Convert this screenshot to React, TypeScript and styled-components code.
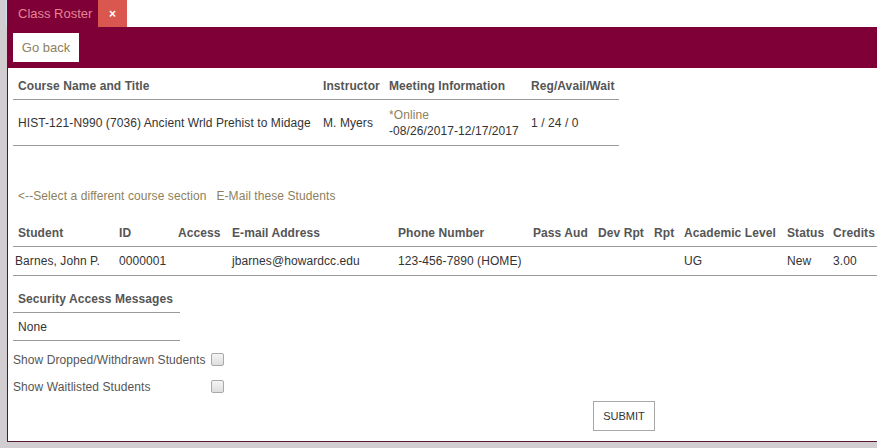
import styled, { createGlobalStyle } from 'styled-components';

const Maroon = '#7f0036';
const Tan = '#8e7f5c';

const GlobalStyle = createGlobalStyle`
    html, body {
        margin: 0;
        padding: 0;
        background: #ffffff;
        font-family: "Liberation Sans", Arial, sans-serif;
        font-size: 12px;
        letter-spacing: 0.08px;
        color: #333;
    }
    body {
        height: 448px;
        overflow: hidden;
    }
`;

const Page = styled.div`
    width: 877px;
    height: 448px;
    overflow: hidden;
    background: #d2cdd0;
`;

const TabStrip = styled.div`
    display: flex;
    height: 27px;
    margin-left: 6px;
    background: #ffffff;
    border-left: 1px solid #cfe3ee;
`;

const Tab = styled.div`
    display: flex;
    align-items: center;
    padding: 0 0 0 11px;
    width: 91px;
    box-sizing: border-box;
    background: ${Maroon};
    color: #e58592;
    font-size: 13px;
    letter-spacing: 0;
    white-space: nowrap;
`;

const CloseTab = styled.div`
    display: flex;
    align-items: center;
    justify-content: center;
    width: 29px;
    background: #d9574f;
    color: #ffffff;
    font-size: 12px;
    font-weight: bold;
`;

const Panel = styled.div`
    margin-left: 7px;
    height: 414px;
    background: #ffffff;
    border-left: 1px solid ${Maroon};
    border-bottom: 1px solid #5a1a35;
    overflow: hidden;
`;

const HeaderBar = styled.div`
    display: flex;
    align-items: center;
    height: 41px;
    padding: 0 5px;
    background: ${Maroon};
`;

const BackButton = styled.button`
    height: 29px;
    width: 66px;
    border: none;
    background: #ffffff;
    color: ${Tan};
    font-family: "Liberation Sans", Arial, sans-serif;
    font-size: 13px;
    padding: 0;
`;

const Content = styled.div`
    padding: 4px 0 0 5px;
`;

const Table = styled.table<{ $width?: number }>`
    border-collapse: collapse;
    table-layout: ${p => (p.$width ? 'fixed' : 'auto')};
    width: ${p => (p.$width ? `${p.$width}px` : 'auto')};
`;

const Th = styled.th`
    height: 27px;
    padding: 0 5px;
    text-align: left;
    font-weight: bold;
    color: #555;
    white-space: nowrap;
    overflow: hidden;
    border-bottom: 1px solid #9a9a9a;
`;

const Td = styled.td<{ $tight?: boolean; $height?: number }>`
    height: ${p => p.$height ?? 27}px;
    padding: 0 5px 0 ${p => (p.$tight ? 2 : 5)}px;
    text-align: left;
    vertical-align: middle;
    line-height: 16px;
    color: #333;
    white-space: nowrap;
    border-bottom: 1px solid #9a9a9a;
`;

const Online = styled.div`
    color: ${Tan};
`;

const LinkRow = styled.div`
    display: flex;
    gap: 10px;
    margin: 43px 0 16px 5px;
    line-height: 14px;
`;

const Link = styled.a`
    color: ${Tan};
    text-decoration: none;
`;

const SecurityTable = styled(Table)`
    margin-top: 9px;
`;

const CheckList = styled.div`
    margin-top: 5px;
`;

const CheckRow = styled.label`
    display: flex;
    align-items: center;
    height: 27px;
    color: #555;
`;

const CheckLabel = styled.span`
    width: 198px;
`;

const Box = styled.span`
    width: 11px;
    height: 11px;
    border: 1px solid #a9a9a9;
    border-radius: 2px;
    background: linear-gradient(#f4f4f4, #dedede);
`;

const SubmitRow = styled.div`
    display: flex;
    padding: 1px 0 0 580px;
`;

const SubmitButton = styled.button`
    width: 62px;
    height: 30px;
    border: 1px solid #a8a8a8;
    background: #ffffff;
    color: #333;
    font-family: "Liberation Sans", Arial, sans-serif;
    font-size: 11px;
    padding: 0;
`;

const courseCols = [305, 66, 142, 93];
const studentCols = [101, 59, 54, 166, 135, 65, 56, 30, 103, 46, 52];
const studentHeads = ['Student', 'ID', 'Access', 'E-mail Address', 'Phone Number', 'Pass Aud', 'Dev Rpt', 'Rpt', 'Academic Level', 'Status', 'Credits'];
const studentRow = ['Barnes, John P.', '0000001', '', 'jbarnes@howardcc.edu', '123-456-7890 (HOME)', '', '', '', 'UG', 'New', '3.00'];

const sum = (a: number[]) => a.reduce((x, y) => x + y, 0);

export default function App() {
    return (
        <Page>
            <GlobalStyle />
            <TabStrip>
                <Tab>Class Roster</Tab>
                <CloseTab>×</CloseTab>
            </TabStrip>
            <Panel>
                <HeaderBar>
                    <BackButton>Go back</BackButton>
                </HeaderBar>
                <Content>
                    <Table $width={sum(courseCols)}>
                        <colgroup>
                            {courseCols.map((w, i) => (
                                <col key={i} style={{ width: w }} />
                            ))}
                        </colgroup>
                        <thead>
                            <tr>
                                <Th>Course Name and Title</Th>
                                <Th>Instructor</Th>
                                <Th>Meeting Information</Th>
                                <Th>Reg/Avail/Wait</Th>
                            </tr>
                        </thead>
                        <tbody>
                            <tr>
                                <Td $height={45}>HIST-121-N990 (7036) Ancient Wrld Prehist to Midage</Td>
                                <Td $height={45}>M. Myers</Td>
                                <Td $height={45}>
                                    <Online>*Online</Online>
                                    <div>-08/26/2017-12/17/2017</div>
                                </Td>
                                <Td $height={45}>1 / 24 / 0</Td>
                            </tr>
                        </tbody>
                    </Table>

                    <LinkRow>
                        <Link>&lt;--Select a different course section</Link>
                        <Link>E-Mail these Students</Link>
                    </LinkRow>

                    <Table $width={sum(studentCols)}>
                        <colgroup>
                            {studentCols.map((w, i) => (
                                <col key={i} style={{ width: w }} />
                            ))}
                        </colgroup>
                        <thead>
                            <tr>
                                {studentHeads.map(h => (
                                    <Th key={h}>{h}</Th>
                                ))}
                            </tr>
                        </thead>
                        <tbody>
                            <tr>
                                {studentRow.map((v, i) => (
                                    <Td key={i} $tight={i === 0} $height={28}>{v}</Td>
                                ))}
                            </tr>
                        </tbody>
                    </Table>

                    <SecurityTable $width={167}>
                        <thead>
                            <tr>
                                <Th>Security Access Messages</Th>
                            </tr>
                        </thead>
                        <tbody>
                            <tr>
                                <Td>None</Td>
                            </tr>
                        </tbody>
                    </SecurityTable>

                    <CheckList>
                        <CheckRow>
                            <CheckLabel>Show Dropped/Withdrawn Students</CheckLabel>
                            <Box />
                        </CheckRow>
                        <CheckRow>
                            <CheckLabel>Show Waitlisted Students</CheckLabel>
                            <Box />
                        </CheckRow>
                    </CheckList>

                    <SubmitRow>
                        <SubmitButton>SUBMIT</SubmitButton>
                    </SubmitRow>
                </Content>
            </Panel>
        </Page>
    );
}
